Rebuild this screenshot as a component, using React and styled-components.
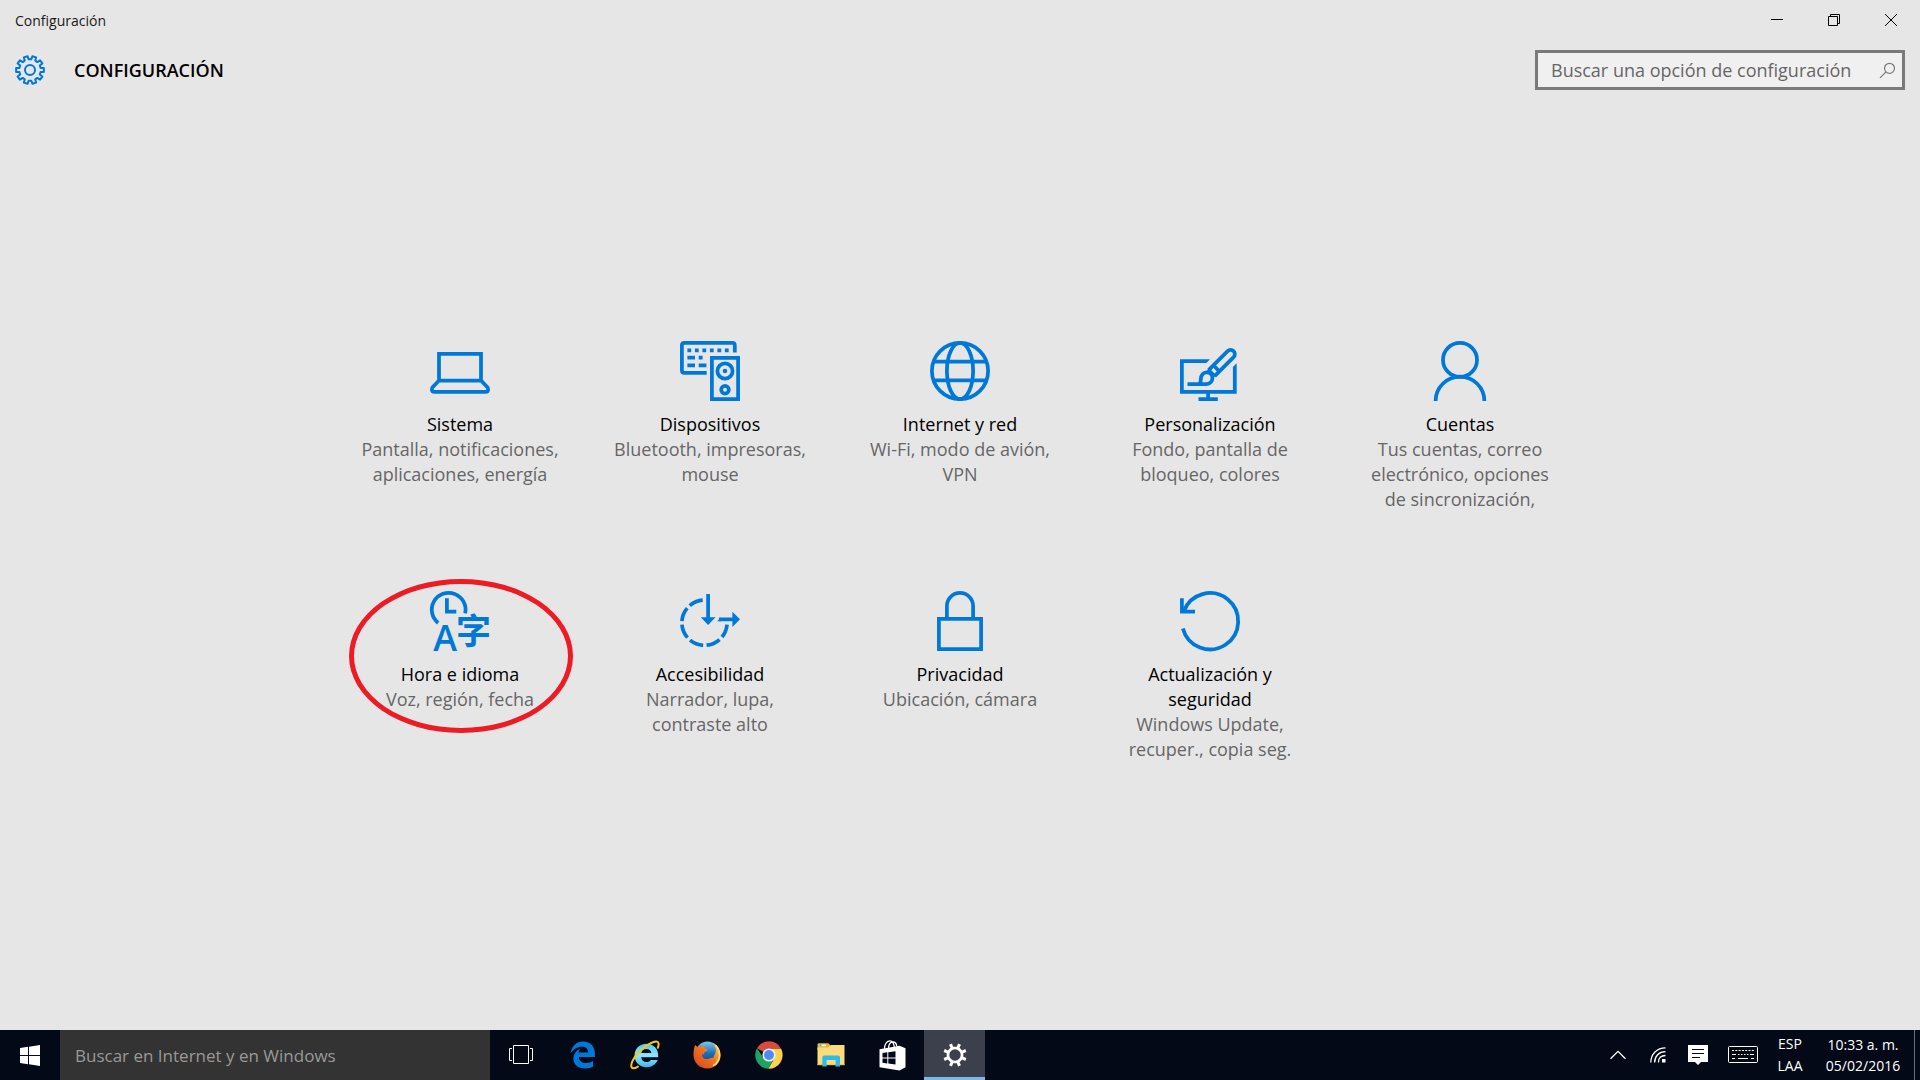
import React, { useState } from 'react';
import styled, { createGlobalStyle } from 'styled-components';

const GlobalStyle = createGlobalStyle`
  * {
    box-sizing: border-box;
  }

  body {
    margin: 0;
    background: #e6e6e6;
    font-family: 'Open Sans', 'Noto Sans', sans-serif;
  }

  button,
  input {
    font-family: inherit;
  }
`;

const Desktop = styled.div`
  display: flex;
  flex-direction: column;
  min-height: 100vh;
`;

const TitleBar = styled.div`
  display: flex;
  align-items: center;
  justify-content: space-between;
  height: 40px;
  padding: 0 1px 0 15px;
  font-size: 14px;
  color: #1a1a1a;
`;

const WindowButtons = styled.div`
  display: flex;
`;

const WindowButton = styled.button`
  display: flex;
  align-items: center;
  justify-content: center;
  width: 57px;
  height: 40px;
  padding: 0;
  border: 0;
  background: transparent;
  color: #000;
`;

const Header = styled.header`
  display: flex;
  align-items: center;
  height: 60px;
  padding: 0 15px;
`;

const Heading = styled.h1`
  flex: 1;
  margin: 0 0 0 29px;
  font-size: 18px;
  line-height: 24px;
  font-weight: 600;
  color: #000;
`;

const SearchBox = styled.label`
  display: flex;
  align-items: center;
  width: 370px;
  height: 40px;
  padding: 0 6px 0 13px;
  border: 3px solid #7a7a7a;
  background: #f0f0f0;
`;

const SearchInput = styled.input`
  flex: 1;
  min-width: 0;
  padding: 0;
  border: 0;
  outline: 0;
  background: transparent;
  font-size: 18px;
  color: #000;

  &::placeholder {
    color: #666;
    opacity: 1;
  }
`;

const Main = styled.main`
  display: flex;
  flex: 1;
  align-items: center;
  justify-content: center;
`;

const Categories = styled.nav`
  display: grid;
  grid-template-columns: repeat(5, 250px);
  grid-auto-rows: 250px;
`;

const Category = styled.a`
  position: relative;
  display: flex;
  flex-direction: column;
  align-items: center;
  padding: 26px 25px 0;
  font-size: 18px;
  line-height: 25px;
  text-align: center;
  text-decoration: none;
`;

const CategoryTitle = styled.span`
  margin-top: 11px;
  padding: 0 20px;
  color: #000;
`;

const CategoryText = styled.span`
  color: #666;
`;

const Highlight = styled.span`
  position: absolute;
  top: 14px;
  left: 14px;
  width: 224px;
  height: 154px;
  border: 5px solid #ed1c24;
  border-radius: 50%;
  pointer-events: none;
`;

const Taskbar = styled.footer`
  display: flex;
  height: 50px;
  background: #030917;
  color: #fff;
`;

const TaskButton = styled.button`
  display: flex;
  align-items: center;
  justify-content: center;
  width: ${(props) => props.$width || 61}px;
  padding: 0;
  border: 0;
  border-top: 3px solid transparent;
  border-bottom: 3px solid ${(props) => (props.$active ? '#76b9ed' : 'transparent')};
  background: ${(props) => (props.$active ? '#3b404c' : 'transparent')};
  color: #fff;
`;

const TaskSearch = styled.input`
  width: 430px;
  padding: 0 15px;
  border: 0;
  border-radius: 0;
  outline: 0;
  background: #333;
  font-size: 17px;
  color: #fff;

  &::placeholder {
    color: #999;
    opacity: 1;
  }
`;

const TaskButtons = styled.div`
  display: flex;
  gap: 1px;
  flex: 1;
`;

const Tray = styled.div`
  display: flex;
  align-items: center;
`;

const TrayButton = styled.button`
  display: flex;
  align-items: center;
  justify-content: center;
  width: ${(props) => props.$width}px;
  height: 50px;
  padding: 0;
  border: 0;
  background: transparent;
  color: #fff;
`;

const TrayText = styled.button`
  display: flex;
  flex-direction: column;
  align-items: center;
  width: ${(props) => props.$width}px;
  padding: 0;
  border: 0;
  background: transparent;
  font-size: 14px;
  line-height: ${(props) => props.$line || 22}px;
  white-space: nowrap;
  color: #fff;
`;

const ShowDesktop = styled.button`
  width: 6px;
  height: 50px;
  padding: 0;
  border: 0;
  border-left: 1px solid #6b6f78;
  background: transparent;
`;

const IconCanvas = styled.svg`
  flex: none;
  overflow: visible;
`;

// outline of a gear with evenly spaced teeth, centred on (c, c)
function gearPath(c, teeth, outer, inner, topWidth, baseWidth) {
  const step = (Math.PI * 2) / teeth;
  const point = (radius, angle) =>
    `${(c + radius * Math.sin(angle)).toFixed(2)} ${(c - radius * Math.cos(angle)).toFixed(2)}`;
  const points = [];
  for (let i = 0; i < teeth; i++) {
    const mid = step * (i + 0.5);
    points.push(
      point(inner, mid - step * baseWidth),
      point(outer, mid - step * topWidth),
      point(outer, mid + step * topWidth),
      point(inner, mid + step * baseWidth)
    );
  }
  return `M${points.join('L')}Z`;
}

function LineIcon({ children }) {
  return (
    <IconCanvas
      width="60"
      height="60"
      viewBox="0 0 60 60"
      fill="none"
      stroke="#0078d7"
      strokeWidth="3.75"
      aria-hidden="true"
    >
      {children}
    </IconCanvas>
  );
}

const SystemIcon = () => (
  <LineIcon>
    <path d="M9 39.5V12.9H51V39.5ZM9 39.5L2.8 46Q1.9 47 1.9 48.5Q1.9 50.8 4.5 50.8H55.5Q58.1 50.8 58.1 48.5Q58.1 47 57.2 46L51 39.5" />
  </LineIcon>
);

const DevicesIcon = () => (
  <LineIcon>
    <path d="M26.7 31.8H4.4Q1.9 31.8 1.9 29.5V4.3Q1.9 1.9 4.4 1.9H52.4Q54.8 1.9 54.8 4.3V11.6" />
    <path d="M7.4 9.3H49" strokeDasharray="3.8 3.7" />
    <path d="M7.4 16.7H15M18.7 16.7H22.6M7.4 24.3H15M18.7 24.3H26.4" />
    <path d="M31.9 16.9H58.1V58.1H31.9Z" />
    <circle cx="45" cy="30" r="7.6" />
    <circle cx="45" cy="30" r="2.3" fill="#0078d7" stroke="none" />
    <circle cx="45" cy="48.7" r="3.8" />
  </LineIcon>
);

const NetworkIcon = () => (
  <LineIcon>
    <circle cx="30" cy="30" r="28.1" />
    <ellipse cx="30" cy="30" rx="13.1" ry="28.1" />
    <path d="M3.5 20.7H56.5M3.5 39.4H56.5" />
  </LineIcon>
);

const PersonalizationIcon = () => (
  <LineIcon>
    <path d="M0 18.3H30L26.3 22.1H3.75V48.9H52.9V26L56.7 22.2V52.7H0Z" fill="#0078d7" stroke="none" />
    <path d="M28.1 52V57M18.5 58.1H37.8" />
    <path d="M28.6 29.2L47.6 10.2A4.2 4.2 0 0 1 53.6 16.2L34.6 35.2" />
    <path d="M33.2 24L39 30M28 28.5L35 35.5" />
    <path d="M7.5 43H18C20.5 43 20.8 41 20.8 38.5C20.8 34 23.3 31.4 26.7 31.4C30.2 31.4 32.4 34.2 32.4 37C32.4 40.5 30 43 26.5 43H17" />
  </LineIcon>
);

const AccountsIcon = () => (
  <LineIcon>
    <circle cx="30" cy="18.9" r="17" />
    <path d="M5.6 60A24.4 24.4 0 0 1 54.4 60" />
  </LineIcon>
);

const TimeIcon = () => (
  <LineIcon>
    <path d="M35.2 22.3A16.9 16.9 0 1 0 8.2 32" />
    <path d="M16.9 7.3V20.7H26.3" />
    <g fill="#0078d7" stroke="none">
      <text x="3.3" y="60" fontSize="36" fontWeight="600" fontFamily="Open Sans, sans-serif">
        A
      </text>
      <text x="26" y="53" fontSize="35" fontWeight="700" fontFamily="Noto Sans CJK SC, sans-serif">
        字
      </text>
    </g>
  </LineIcon>
);

const AccessIcon = () => (
  <LineIcon>
    <path d="M22.7 9.2A22.6 22.6 0 1 0 47 33.6" strokeDasharray="14.2 3.55" />
    <path d="M28.1 3V28M39 28.3H54" />
    <path d="M20.8 26.3H35.6L28.1 34ZM52.4 20.7L60 28.3L52.4 36ZM37 30.2L41 26.4V30.2Z" fill="#0078d7" stroke="none" />
  </LineIcon>
);

const PrivacyIcon = () => (
  <LineIcon>
    <path d="M8.9 27.9H51.1V58.1H8.9Z" />
    <path d="M16.9 28V15A13.1 13.1 0 0 1 43.1 15V28" />
  </LineIcon>
);

const UpdateIcon = () => (
  <LineIcon>
    <path d="M2.9 37.4A28.1 28.1 0 1 0 3.7 20.5" />
    <path d="M1.9 7.3V20.7H15" />
  </LineIcon>
);

const WindowsLogo = () => (
  <svg width="20" height="21" viewBox="0 0 20 21" fill="#fff" aria-hidden="true">
    <path d="M0 3L8 1.8V10H0ZM9 1.7L20 0V10H9ZM0 11H8V19.2L0 18ZM9 11H20V21L9 19.3Z" />
  </svg>
);

const TaskViewIcon = () => (
  <svg width="24" height="20" viewBox="0 0 24 20" fill="none" stroke="#fff" aria-hidden="true">
    <path d="M4.5 .5H19.5V18.5H4.5ZM3 3.5H.5V15.5H3M21 3.5H23.5V15.5H21" />
  </svg>
);

const EdgeIcon = () => (
  <svg width="26" height="28" viewBox="0 0 26 28" aria-hidden="true">
    <path
      fill="#0078d7"
      d="M.6 12.4C1.6 5.2 6.4.6 13.2.6C20.6.6 24.9 5.8 24.9 12.6V16H8.8C9 20 12.2 22 16 22C18.8 22 21.3 21.3 23.2 20V25.5C21 26.8 18 27.5 15.2 27.5C8 27.5 3.4 23.6 3.4 17.8C3.4 13 6.3 9.4 10.4 7.8C9.2 9 8.8 10.2 8.7 11.4H18C18 7.8 16.2 5.8 12.2 5.8C7.4 5.8 3.2 8.4 .6 12.4Z"
    />
  </svg>
);

const ExplorerIcon = () => (
  <svg width="30" height="30" viewBox="0 0 30 30" aria-hidden="true">
    <defs>
      <linearGradient id="ieBlue" x1="0" y1="0" x2="0" y2="1">
        <stop offset="0" stopColor="#4fc9f1" />
        <stop offset=".5" stopColor="#8be6fc" />
        <stop offset="1" stopColor="#3fb8ea" />
      </linearGradient>
    </defs>
    <path
      fill="url(#ieBlue)"
      d="M16.4 3.8C9.6 3.8 4.6 8.8 4.6 15.6C4.6 22.4 9.4 27.2 16.4 27.2C21.6 27.2 25.8 24.6 27.7 20H20.8C19.8 21.4 18.4 22.1 16.6 22.1C13.4 22.1 11.4 20.2 11.2 17.3H28.2C28.8 9.4 24 3.8 16.4 3.8ZM11.3 12.9C11.8 10.4 13.7 9 16.4 9C19.2 9 21 10.4 21.4 12.9Z"
    />
    <path
      fill="none"
      stroke="#fbc611"
      strokeWidth="2"
      strokeLinecap="round"
      d="M27.8 7.8C29.2 4.2 28.9 1.7 26.4 1.6C22.9 1.4 14.8 5.6 8.6 12.2C3 18.2 .1 25 1.7 27.4C2.7 28.9 5.2 28.3 7.9 26.6"
    />
  </svg>
);

const FirefoxIcon = () => (
  <svg width="28" height="28" viewBox="0 0 28 28" aria-hidden="true">
    <defs>
      <linearGradient id="foxGlobe" x1="0" y1="0" x2="0" y2="1">
        <stop offset="0" stopColor="#7cc8e8" />
        <stop offset=".5" stopColor="#1c6cb4" />
        <stop offset="1" stopColor="#123f80" />
      </linearGradient>
      <linearGradient id="foxTail" x1="0" y1="1" x2="1" y2="0">
        <stop offset="0" stopColor="#d9401c" />
        <stop offset=".55" stopColor="#ee7522" />
        <stop offset="1" stopColor="#fde36a" />
      </linearGradient>
    </defs>
    <circle cx="14.5" cy="12.6" r="12" fill="url(#foxGlobe)" />
    <path
      fill="url(#foxTail)"
      d="M2.2 4L4.4 6C6 5 7.6 5 8.9 5.5L11.8 4.1C11.2 5.4 11.2 6.4 11.6 7.4L14.6 8.4C14.2 10 12.6 10.6 11 11.4L11.3 13.6L9.2 13C8.4 16.2 11.4 18.6 14.6 18C17 17.4 18.2 16.2 20.4 17C20.8 14 23.4 12.4 22.7 7.8C22.2 5.4 21.4 3.8 19.8 2.2C24.6 4 27.6 8.6 27.6 14.2C27.6 21.8 21.8 27.4 14.2 27.4C6.4 27.4 .5 21.6 .5 14C.5 10.2 1 6.6 2.2 4Z"
    />
    <path
      fill="none"
      stroke="#fbe273"
      strokeWidth="1.5"
      d="M22.5 4.2C26.4 7.8 27.7 13.6 25.6 18.6C24.2 21.8 21.9 24 20 24.8"
    />
  </svg>
);

const ChromeIcon = () => (
  <svg width="28" height="28" viewBox="0 0 28 28" aria-hidden="true">
    <path fill="#d84b3e" d="M14 14L2 7.2A13.8 13.8 0 0 1 26.1 7.7H14Z" />
    <path fill="#ffd24d" d="M26.1 7.7A13.8 13.8 0 0 1 13.2 27.8L19.4 17.2L14 7.7Z" />
    <path fill="#1ea362" d="M2 7.2A13.8 13.8 0 0 0 13.2 27.8L19.4 17.2L8.6 17.2Z" />
    <circle cx="14" cy="14" r="6.6" fill="#f1f1f1" />
    <circle cx="14" cy="14" r="5" fill="#4c8bf5" />
  </svg>
);

const FolderIcon = () => (
  <svg width="28" height="24" viewBox="0 0 28 24" aria-hidden="true">
    <path fill="#eab42f" d="M.5 1.5Q.5 .3 1.8 .3H11.5L13.5 2.5V7H.5Z" />
    <path fill="#fff" d="M2.5 1.6H9V3.2H2.5Z" />
    <path fill="#2fb0e6" d="M2.5 1.6H4.5V3.2H2.5Z" />
    <path fill="#fbdc7b" d="M.5 4.4H11L14 2H27.5V22H.5Z" />
    <path fill="#efc65c" d="M.5 21H27.5V22.2H.5Z" />
    <path fill="#2ebbe8" d="M5.3 23.4V14.5Q5.3 12.5 7.3 12.5H21Q23 12.5 23 14.5V23.4H18.6V17H9.6V23.4Z" />
  </svg>
);

const StoreIcon = () => (
  <svg width="27" height="31" viewBox="0 0 27 31" aria-hidden="true">
    <path
      fill="none"
      stroke="#fff"
      strokeWidth="1.3"
      d="M5.5 9C5.3 4.8 7.4 1.2 10.8 .9C13.2 .8 14.8 3 15.3 7M9.5 8C9.8 4.4 11.6 2 14 2C16.5 2 17.6 4 17.8 6.5"
    />
    <path fill="#fff" d="M.5 9.2L20.5 5.8L26.5 8.3V27.3L20.5 30.5L.5 27.3Z" />
    <path
      fill="#030917"
      d="M3.5 13L8.3 12.3V17.4H3.5ZM9.3 12.2L16.5 11.2V17.4H9.3ZM3.5 18.4H8.3V23.4L3.5 22.7ZM9.3 18.4H16.5V24.6L9.3 23.6Z"
    />
  </svg>
);

const HeaderGear = () => (
  <svg width="30" height="30" viewBox="0 0 30 30" fill="none" stroke="#0078d7" strokeWidth="2" aria-hidden="true">
    <path d={gearPath(15, 10, 14, 10.8, 0.22, 0.31)} strokeLinejoin="round" />
    <circle cx="15" cy="15" r="5" />
  </svg>
);

const TaskGear = () => (
  <svg width="24" height="24" viewBox="0 0 24 24" fill="none" stroke="#fff" aria-hidden="true">
    <path
      d={gearPath(12, 8, 11.8, 8.5, 0.17, 0.22) + 'M12 6.3A5.7 5.7 0 1 0 12 17.7A5.7 5.7 0 1 0 12 6.3Z'}
      fill="#fff"
      fillRule="evenodd"
      stroke="none"
    />
  </svg>
);

const SearchIcon = () => (
  <svg width="17" height="17" viewBox="0 0 17 17" fill="none" stroke="#7a7a7a" strokeWidth="1.2" aria-hidden="true">
    <circle cx="10.5" cy="6.3" r="5" />
    <path d="M7 9.8L1 15.9" />
  </svg>
);

const WifiIcon = () => (
  <svg width="16" height="16" viewBox="0 0 16 16" fill="none" stroke="#fff" strokeWidth="1.3" aria-hidden="true">
    <path d="M.8 15.5C.8 7 7 .9 15.5 .9M4.6 15.5C4.6 9 9 4.7 15.5 4.7M8.4 15.5C8.4 11 11 8.5 15.5 8.5" />
    <path d="M12 12H15.5V15.5H12Z" fill="#fff" stroke="none" />
  </svg>
);

const MessageIcon = () => (
  <svg width="20" height="20" viewBox="0 0 20 20" aria-hidden="true">
    <path d="M0 0H20V17H13L10 20L7 17H0Z" fill="#fff" />
    <path d="M4 4.5H16M4 8.5H16M4 12.5H12" stroke="#030917" />
  </svg>
);

const KeyboardIcon = () => (
  <svg width="30" height="18" viewBox="0 0 30 18" fill="none" stroke="#fff" aria-hidden="true">
    <rect x=".5" y=".5" width="29" height="16" rx="1" />
    <path d="M4 4.5H26" strokeDasharray="2 1.3" />
    <path d="M4 8.5H8M22 8.5H26" />
    <path d="M10 8.5H21" strokeDasharray="1.5 1.5" />
    <path d="M4 12.5H7M10 12.5H20M23 12.5H26" />
  </svg>
);

const categories = [
  { title: 'Sistema', text: 'Pantalla, notificaciones, aplicaciones, energía', Icon: SystemIcon },
  { title: 'Dispositivos', text: 'Bluetooth, impresoras, mouse', Icon: DevicesIcon },
  { title: 'Internet y red', text: 'Wi-Fi, modo de avión, VPN', Icon: NetworkIcon },
  { title: 'Personalización', text: 'Fondo, pantalla de bloqueo, colores', Icon: PersonalizationIcon },
  { title: 'Cuentas', text: 'Tus cuentas, correo electrónico, opciones de sincronización,', Icon: AccountsIcon },
  { title: 'Hora e idioma', text: 'Voz, región, fecha', Icon: TimeIcon, highlighted: true },
  { title: 'Accesibilidad', text: 'Narrador, lupa, contraste alto', Icon: AccessIcon },
  { title: 'Privacidad', text: 'Ubicación, cámara', Icon: PrivacyIcon },
  { title: 'Actualización y seguridad', text: 'Windows Update, recuper., copia seg.', Icon: UpdateIcon },
];

const apps = [
  { name: 'Vista de tareas', Icon: TaskViewIcon },
  { name: 'Microsoft Edge', Icon: EdgeIcon },
  { name: 'Internet Explorer', Icon: ExplorerIcon },
  { name: 'Firefox', Icon: FirefoxIcon },
  { name: 'Google Chrome', Icon: ChromeIcon },
  { name: 'Explorador de archivos', Icon: FolderIcon },
  { name: 'Tienda', Icon: StoreIcon },
  { name: 'Configuración', Icon: TaskGear },
];

function SettingsHeader() {
  const [query, setQuery] = useState('');

  return (
    <>
      <TitleBar>
        <span>Configuración</span>
        <WindowButtons>
          <WindowButton aria-label="Minimizar">
            <svg width="12" height="12" stroke="currentColor">
              <path d="M0 5.5H12" />
            </svg>
          </WindowButton>
          <WindowButton aria-label="Restaurar">
            <svg width="12" height="12" fill="none" stroke="currentColor">
              <path d="M.5 2.5H9.5V11.5H.5ZM2.5 2.5V.5H11.5V9.5H9.5" />
            </svg>
          </WindowButton>
          <WindowButton aria-label="Cerrar">
            <svg width="12" height="12" stroke="currentColor">
              <path d="M0 0L12 12M12 0L0 12" />
            </svg>
          </WindowButton>
        </WindowButtons>
      </TitleBar>
      <Header>
        <HeaderGear />
        <Heading>CONFIGURACIÓN</Heading>
        <SearchBox>
          <SearchInput
            aria-label="Buscar una opción de configuración"
            placeholder="Buscar una opción de configuración"
            value={query}
            onChange={(event) => setQuery(event.target.value)}
          />
          <SearchIcon />
        </SearchBox>
      </Header>
    </>
  );
}

function WindowsTaskbar() {
  const [active, setActive] = useState('Configuración');

  return (
    <Taskbar>
      <TaskButton $width={60} aria-label="Inicio">
        <WindowsLogo />
      </TaskButton>
      <TaskSearch
        aria-label="Buscar en Internet y en Windows"
        placeholder="Buscar en Internet y en Windows"
      />
      <TaskButtons>
        {apps.map(({ name, Icon }) => (
          <TaskButton
            key={name}
            aria-label={name}
            $active={active === name}
            onClick={() => setActive(name)}
          >
            <Icon />
          </TaskButton>
        ))}
      </TaskButtons>
      <Tray>
        <TrayButton $width={40} aria-label="Mostrar iconos ocultos">
          <svg width="16" height="10" fill="none" stroke="currentColor" strokeWidth="1.3">
            <path d="M.5 8.8L8 1.3L15.5 8.8" />
          </svg>
        </TrayButton>
        <TrayButton $width={40} aria-label="Red">
          <WifiIcon />
        </TrayButton>
        <TrayButton $width={40} aria-label="Centro de actividades">
          <MessageIcon />
        </TrayButton>
        <TrayButton $width={50} aria-label="Teclado táctil">
          <KeyboardIcon />
        </TrayButton>
        <TrayText $width={44}>
          <span>ESP</span>
          <span>LAA</span>
        </TrayText>
        <TrayText $width={102} $line={21}>
          <span>10:33 a. m.</span>
          <span>05/02/2016</span>
        </TrayText>
        <ShowDesktop aria-label="Mostrar escritorio" />
      </Tray>
    </Taskbar>
  );
}

function App() {
  return (
    <Desktop>
      <GlobalStyle />
      <SettingsHeader />
      <Main>
        <Categories>
          {categories.map(({ title, text, Icon, highlighted }) => (
            <Category key={title} href="#">
              <Icon />
              <CategoryTitle>{title}</CategoryTitle>
              <CategoryText>{text}</CategoryText>
              {highlighted && <Highlight />}
            </Category>
          ))}
        </Categories>
      </Main>
      <WindowsTaskbar />
    </Desktop>
  );
}

export default App;
